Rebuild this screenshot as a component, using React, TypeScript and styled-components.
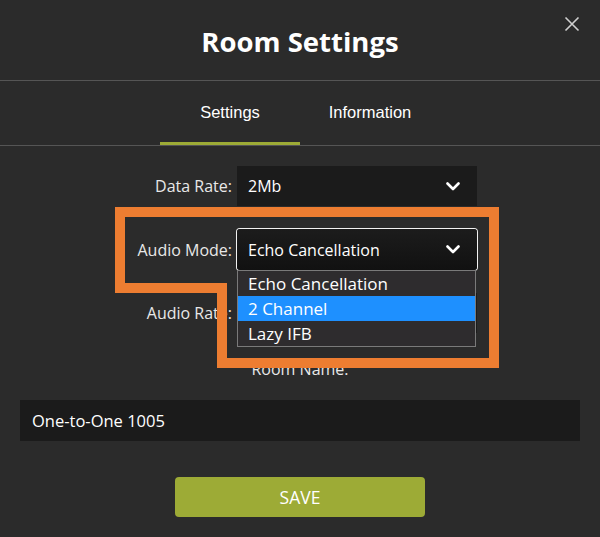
import styled, { createGlobalStyle } from 'styled-components';

const GlobalStyle = createGlobalStyle`
	html, body {
		margin: 0;
		padding: 0;
		background: #2b2b2b;
	}
	* {
		box-sizing: border-box;
	}
`;

const Page = styled.div`
	position: relative;
	width: 600px;
	height: 537px;
	background: #2b2b2b;
	overflow: hidden;
	font-family: 'Open Sans', 'Noto Sans', sans-serif;
	color: #fff;
`;

const Header = styled.header`
	position: relative;
	height: 81px;
	display: flex;
	align-items: center;
	justify-content: center;
	border-bottom: 1px solid #555;
`;

const Title = styled.h1`
	margin: 0;
	padding-top: 2px;
	font-size: 27.5px;
	font-weight: 700;
	color: #fff;
`;

const CloseButton = styled.button`
	position: absolute;
	top: 16px;
	right: 18px;
	width: 18px;
	height: 18px;
	padding: 0;
	border: none;
	background: none;
	cursor: pointer;
	display: flex;
`;

const Tabs = styled.nav`
	display: flex;
	justify-content: center;
	border-bottom: 1px solid #555;
`;

const Tab = styled.div<{ active: boolean }>`
	width: 140px;
	height: 64px;
	display: flex;
	align-items: center;
	justify-content: center;
	padding-top: 1px;
	border-bottom: 3px solid ${({ active }) => (active ? '#9dab36' : 'transparent')};
	font-family: 'Liberation Sans', Arial, sans-serif;
	font-size: 16.5px;
	color: #fff;
	cursor: pointer;
`;

const Form = styled.div`
	display: flex;
	flex-direction: column;
	padding: 20px 20px 0;
`;

const Fields = styled.div`
	display: flex;
	flex-direction: column;
	gap: 23px;
`;

const FieldRow = styled.div`
	display: grid;
	grid-template-columns: 212px 240px;
	column-gap: 5px;
	align-items: center;
`;

const Label = styled.label`
	text-align: right;
	font-size: 16px;
	color: #e8e8e8;
`;

const SelectWrap = styled.div`
	position: relative;
`;

const SelectBox = styled.div<{ focused?: boolean }>`
	height: ${({ focused }) => (focused ? '41px' : '40px')};
	display: flex;
	align-items: center;
	justify-content: space-between;
	padding: 0 17px 0 11px;
	background: ${({ focused }) => (focused ? 'linear-gradient(#1c1c1c, #111)' : '#1b1b1b')};
	border-radius: ${({ focused }) => (focused ? '3px' : '0')};
	box-shadow: ${({ focused }) => (focused ? '0 0 0 1px #f2f2f2' : 'none')};
	font-size: 16px;
	color: #fff;
`;

const Chevron = () => (
	<svg width="14" height="9" viewBox="0 0 14 9">
		<path d="M1.5 1.5 L7 7 L12.5 1.5" fill="none" stroke="#fff" strokeWidth="2.6" strokeLinecap="round" strokeLinejoin="round" />
	</svg>
);

const OptionList = styled.ul`
	position: absolute;
	top: 100%;
	left: 0;
	right: 1px;
	margin: 0;
	padding: 0;
	list-style: none;
	background: #2e2c2e;
	border: 1px solid #7a7a7a;
	z-index: 2;
`;

const Option = styled.li<{ selected?: boolean }>`
	height: 25px;
	line-height: 25px;
	padding-left: 10px;
	font-size: 17px;
	color: #fff;
	background: ${({ selected }) => (selected ? '#1e90ff' : 'transparent')};
`;

const RoomNameLabel = styled.div`
	margin-top: 26px;
	height: 20px;
	line-height: 20px;
	text-align: center;
	font-size: 16px;
	color: #e8e8e8;
`;

const TextInput = styled.input`
	margin-top: 21px;
	width: 100%;
	height: 41px;
	padding: 0 12px;
	border: none;
	outline: none;
	background: #1b1b1b;
	font-family: 'Open Sans', 'Noto Sans', sans-serif;
	font-size: 16.5px;
	color: #fff;
`;

const SaveButton = styled.button`
	align-self: center;
	margin-top: 36px;
	width: 250px;
	height: 40px;
	border: none;
	border-radius: 4px;
	background: #9dab36;
	font-family: 'Open Sans', 'Noto Sans', sans-serif;
	font-size: 17.5px;
	color: #fff;
	cursor: pointer;
`;

const Annotation = styled.svg`
	position: absolute;
	top: 0;
	left: 0;
	pointer-events: none;
	z-index: 5;
`;

const App = () => {
	return (
		<>
			<GlobalStyle />
			<Page>
				<Header>
					<Title>Room Settings</Title>
					<CloseButton aria-label="Close">
						<svg width="16" height="16" viewBox="0 0 16 16">
							<path d="M1.5 1.5 L14.5 14.5 M14.5 1.5 L1.5 14.5" stroke="#d0d0d0" strokeWidth="1.6" />
						</svg>
					</CloseButton>
				</Header>

				<Tabs>
					<Tab active>Settings</Tab>
					<Tab active={false}>Information</Tab>
				</Tabs>

				<Form>
					<Fields>
						<FieldRow>
							<Label>Data Rate:</Label>
							<SelectWrap>
								<SelectBox>
									2Mb
									<Chevron />
								</SelectBox>
							</SelectWrap>
						</FieldRow>
						<FieldRow>
							<Label>Audio Mode:</Label>
							<SelectWrap>
								<SelectBox focused>
									Echo Cancellation
									<Chevron />
								</SelectBox>
								<OptionList>
									<Option>Echo Cancellation</Option>
									<Option selected>2 Channel</Option>
									<Option>Lazy IFB</Option>
								</OptionList>
							</SelectWrap>
						</FieldRow>
						<FieldRow>
							<Label>Audio Rate:</Label>
							<SelectWrap>
								<SelectBox>
									48kHz
									<Chevron />
								</SelectBox>
							</SelectWrap>
						</FieldRow>
					</Fields>

					<RoomNameLabel>Room Name:</RoomNameLabel>
					<TextInput defaultValue="One-to-One 1005" />

					<SaveButton>SAVE</SaveButton>
				</Form>

				<Annotation width="600" height="537">
					<path d="M120 212 L494 212 L494 363 L222 363 L222 288 L120 288 Z" fill="none" stroke="#ed7d31" strokeWidth="10" />
				</Annotation>
			</Page>
		</>
	);
};

export default App;
